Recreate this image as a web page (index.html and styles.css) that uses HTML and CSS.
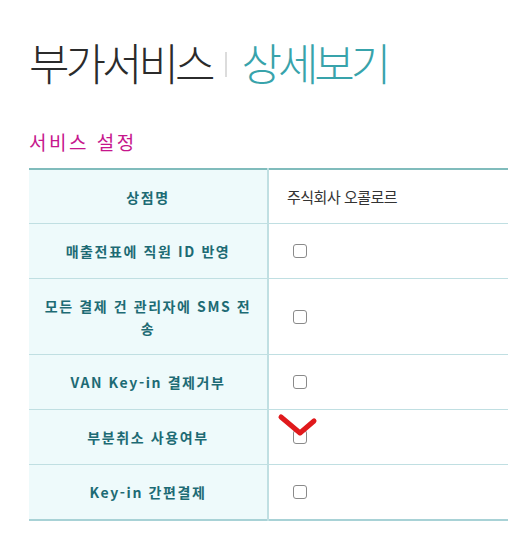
FILE: index.html
```html
<!DOCTYPE html>
<html lang="ko">
<head>
<meta charset="utf-8">
<link rel="stylesheet" href="styles.css">
</head>
<body>
<div class="page">
  <h1 class="title"><span class="title-main">부가서비스</span><span class="sep"></span><span class="title-sub">상세보기</span></h1>
  <h2 class="section">서비스 설정</h2>
  <table class="settings">
    <tr class="head"><th>상점명</th><td class="value">주식회사 오콜로르</td></tr>
    <tr><th>매출전표에 직원 ID 반영</th><td><span class="cb"></span></td></tr>
    <tr class="tall"><th>모든 결제 건 관리자에 SMS 전송</th><td><span class="cb"></span></td></tr>
    <tr><th>VAN Key-in 결제거부</th><td><span class="cb"></span></td></tr>
    <tr><th>부분취소 사용여부</th><td class="marked"><span class="cb"></span>
      <svg class="mark" width="44" height="28" viewBox="0 0 44 28"><path d="M4 4 L23 20 L37 8" fill="none" stroke="#e0191c" stroke-width="5" stroke-linecap="round" stroke-linejoin="round"/></svg>
    </td></tr>
    <tr><th>Key-in 간편결제</th><td><span class="cb"></span></td></tr>
  </table>
</div>
</body>
</html>
```
FILE: styles.css
```css
html, body { margin: 0; padding: 0; background: #fff; overflow: hidden; }
body { font-family: "Noto Sans CJK KR", "Noto Sans", sans-serif; }
.page { padding: 30px 0 0 29px; }
.title {
  margin: 0;
  display: flex;
  align-items: center;
  font-size: 44px;
  font-weight: 300;
  line-height: 64px;
  letter-spacing: -4px;
  height: 64px;
}
.title-main { color: #2b2b2b; }
.sep { width: 2px; height: 25px; background: #dcdcdc; margin: 4px 14px 0 14px; }
.title-sub { color: #38a3ab; }
.section {
  margin: 36px 0 0 0;
  font-size: 19px;
  font-weight: normal;
  color: #c6168c;
  letter-spacing: 2.5px;
  line-height: 24px;
  height: 24px;
}
.settings {
  margin-top: 14px;
  width: 479px;
  border-collapse: collapse;
  border-top: 2px solid #80bcbc;
  border-bottom: 2px solid #a8d2d6;
}
.settings th, .settings td {
  border-top: 1px solid #c0dfe2;
  height: 54px;
  padding: 0;
}
.settings tr.head th, .settings tr.head td { height: 53px; }
.settings th {
  width: 239px;
  background: #eefafb;
  border-right: 2px solid #c0dfe2;
  color: #1d6b74;
  font-size: 14px;
  font-weight: bold;
  letter-spacing: 1.6px;
  line-height: 22px;
  padding: 0 10px;
  box-sizing: border-box;
  text-align: center;
}
.settings tr.tall th, .settings tr.tall td { height: 75px; }
.settings td { padding-left: 24px; }
.settings td.value { font-size: 15px; color: #333; letter-spacing: -0.5px; padding-left: 18px; }
.cb {
  display: block;
  width: 12px;
  height: 12px;
  border: 1px solid #8a8a8a;
  border-radius: 3px;
  background: #fff;
}
.marked { position: relative; }
.mark { position: absolute; left: 8px; top: 3px; }
```
